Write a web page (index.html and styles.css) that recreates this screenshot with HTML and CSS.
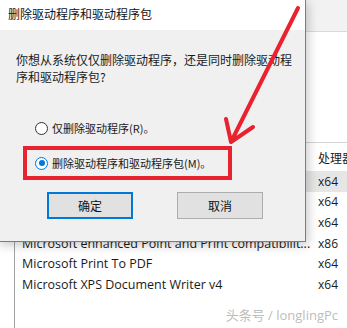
FILE: index.html
```html
<!DOCTYPE html>
<html lang="zh-CN">
<head>
    <meta charset="UTF-8">
    <title>删除驱动程序和驱动程序包</title>
    <link rel="stylesheet" href="styles.css">
</head>
<body>
    <div class="window">
        <div class="toolbar"></div>
        <div class="pane"></div>
        <div class="list">
            <div class="list-head">
                <span class="col-name"></span>
                <span class="col-cpu">处理器</span>
            </div>
            <div class="list-row selected">
                <span class="col-name"></span>
                <span class="col-cpu">x64</span>
            </div>
            <div class="list-row">
                <span class="col-name"></span>
                <span class="col-cpu">x64</span>
            </div>
            <div class="list-row">
                <span class="col-name"></span>
                <span class="col-cpu">x64</span>
            </div>
            <div class="list-row">
                <span class="col-name">Microsoft enhanced Point and Print compatibilit...</span>
                <span class="col-cpu">x86</span>
            </div>
            <div class="list-row">
                <span class="col-name">Microsoft Print To PDF</span>
                <span class="col-cpu">x64</span>
            </div>
            <div class="list-row">
                <span class="col-name">Microsoft XPS Document Writer v4</span>
                <span class="col-cpu">x64</span>
            </div>
        </div>
    </div>

    <div class="dialog">
        <div class="dialog-title">删除驱动程序和驱动程序包</div>
        <div class="dialog-body">
            <p class="question">你想从系统仅仅删除驱动程序，还是同时删除驱动程序和驱动程序包?</p>
            <label class="option">
                <span class="radio"></span>
                仅删除驱动程序(R)。
            </label>
            <div class="highlight">
                <label class="option">
                    <span class="radio checked"></span>
                    删除驱动程序和驱动程序包(M)。
                </label>
            </div>
            <div class="buttons">
                <button class="btn default">确定</button>
                <button class="btn">取消</button>
            </div>
        </div>
    </div>

    <svg class="arrow" width="347" height="328" viewBox="0 0 347 328">
        <path d="M298 8 L231 142 M226 119 L231 142 L253 127" fill="none" stroke="#e8232f" stroke-width="4" stroke-linecap="round" stroke-linejoin="round"/>
    </svg>

    <div class="watermark">头条号 / longlingPc</div>
</body>
</html>
```

FILE: styles.css
```css
* {
    box-sizing: border-box;
}
body {
    margin: 0;
    width: 347px;
    height: 328px;
    overflow: hidden;
    position: relative;
    background: #ffffff;
    font-family: "Open Sans", "Noto Sans CJK SC", sans-serif;
    color: #1a1a1a;
}
.window {
    display: flex;
    flex-direction: column;
    height: 100%;
}
.toolbar {
    height: 32px;
    background: #f2f2f2;
    border-bottom: 1px solid #dadada;
}
.pane {
    height: 110px;
    background: #ffffff;
}
.list {
    flex: 1;
    margin-left: 14px;
    border-left: 1px solid #a3a3a3;
    border-top: 1px solid #d5d5d5;
    font-size: 12.5px;
}
.list-head,
.list-row {
    display: flex;
    align-items: center;
    white-space: nowrap;
}
.list-head {
    height: 28px;
}
.list-row {
    height: 20.6px;
}
.list-row.selected {
    background: #e6e6e6;
}
.col-name {
    flex-shrink: 0;
    width: 297px;
    padding-left: 7px;
    overflow: hidden;
}
.col-cpu {
    flex-shrink: 0;
    padding-left: 6px;
    font-size: 12px;
}
.list-head .col-cpu {
    font-family: "Noto Sans CJK SC", sans-serif;
}
.dialog {
    position: absolute;
    left: -2px;
    top: -1px;
    width: 308px;
    height: 243px;
    display: flex;
    flex-direction: column;
    border: 1px solid #3a8cd4;
    border-top: none;
    box-shadow: 2px 3px 10px rgba(0, 0, 0, 0.22);
    font-family: "Noto Sans CJK SC", sans-serif;
}
.dialog-title {
    height: 31px;
    line-height: 30px;
    padding-left: 9px;
    background: #ffffff;
    font-size: 12px;
    color: #111;
}
.dialog-body {
    flex: 1;
    background: #f0f0f0;
    padding: 21px 0 0 17px;
}
.question {
    margin: 0;
    width: 282px;
    font-size: 12px;
    line-height: 17px;
}
.option {
    display: flex;
    align-items: center;
    gap: 4px;
    font-size: 11px;
    height: 20px;
}
.dialog-body > .option {
    margin: 33px 0 0 19px;
}
.radio {
    width: 13px;
    height: 13px;
    border: 1px solid #333;
    border-radius: 50%;
    background: #fff;
    position: relative;
}
.radio.checked {
    border-color: #0078d7;
}
.radio.checked::after {
    content: "";
    position: absolute;
    left: 2.5px;
    top: 2.5px;
    width: 6px;
    height: 6px;
    border-radius: 50%;
    background: #0078d7;
}
.highlight {
    margin: 8px 0 0 7px;
    width: 209px;
    height: 34px;
    border: 4px solid #e8232f;
    padding-left: 8px;
    display: flex;
    align-items: center;
}
.buttons {
    display: flex;
    gap: 44px;
    margin: 12px 0 0 31px;
}
.btn {
    width: 86px;
    height: 27px;
    background: #e1e1e1;
    border: 1px solid #adadad;
    font-family: "Noto Sans CJK SC", sans-serif;
    font-size: 12px;
    color: #111;
    padding: 0;
}
.btn.default {
    border: 2px solid #0078d7;
}
.arrow {
    position: absolute;
    left: 0;
    top: 0;
}
.watermark {
    position: absolute;
    right: 9px;
    bottom: 4px;
    font-size: 13px;
    color: #bdbdbd;
    font-family: "Open Sans", "Noto Sans CJK SC", sans-serif;
}
```
